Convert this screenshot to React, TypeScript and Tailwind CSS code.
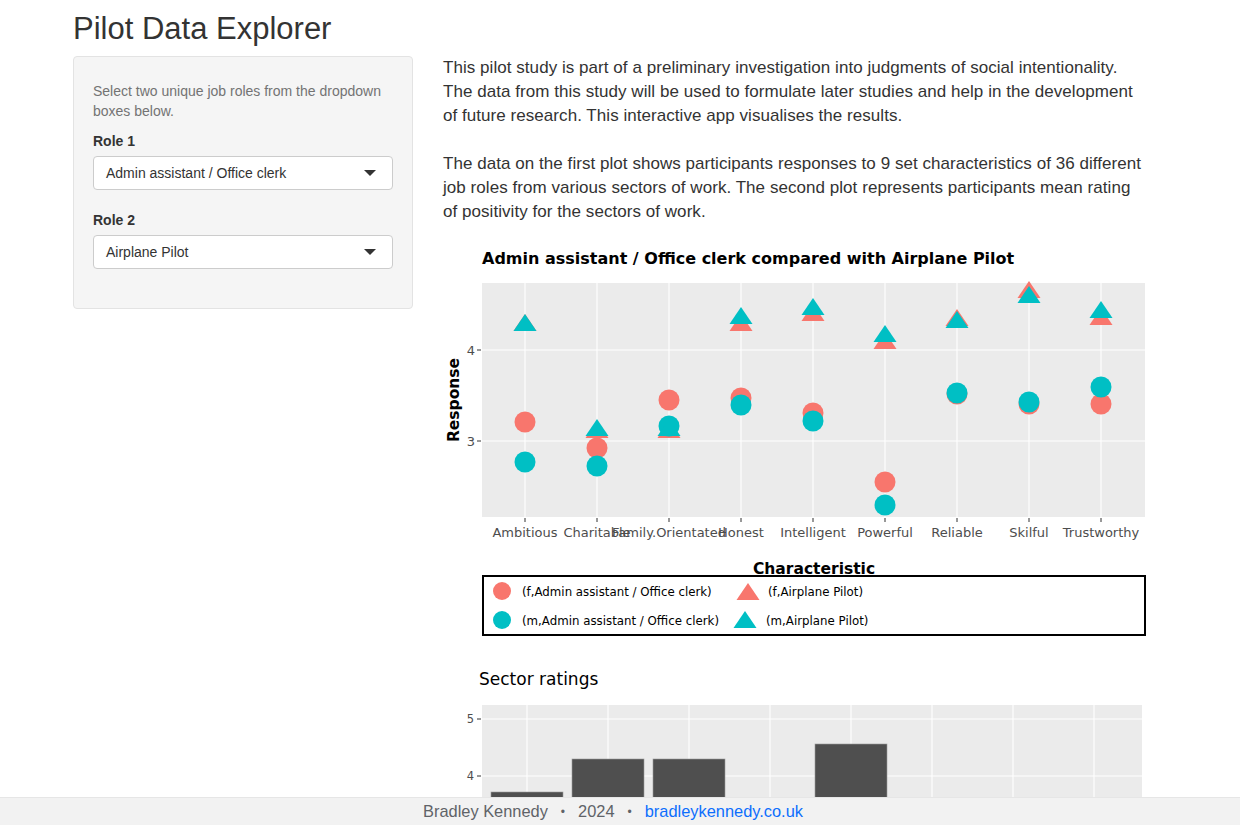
import React from "react";

const RED = "#F8766D";
const TEAL = "#00BFC4";

const TRAITS = [
  "Ambitious",
  "Charitable",
  "Family.Orientated",
  "Honest",
  "Intelligent",
  "Powerful",
  "Reliable",
  "Skilful",
  "Trustworthy",
];

// page-pixel y positions: [f circle, f triangle, m circle, m triangle]
const POINTS: number[][] = [
  [422, 323, 462, 323],
  [448, 430, 466, 428],
  [400, 430, 426, 428],
  [398, 323, 405, 316],
  [413, 313, 421, 307],
  [482, 341, 505, 334],
  [394, 318, 393, 320],
  [404, 290, 402, 295],
  [404, 317, 387, 310],
];

const BARS = [
  { x: 527, top: 792 },
  { x: 608, top: 759 },
  { x: 689, top: 759 },
  { x: 851, top: 744 },
];

const plotFont = "'DejaVu Sans', Verdana, sans-serif";

function tri(cx: number, cy: number) {
  return `${cx},${cy - 9} ${cx - 11.5},${cy + 8} ${cx + 11.5},${cy + 8}`;
}

function Select({ value }: { value: string }) {
  return (
    <div className="flex h-[34px] w-[300px] items-center justify-between rounded-[4px] border border-[#cccccc] bg-white pl-[12px] pr-[16px] text-[14px] text-[#333]">
      <span>{value}</span>
      <svg width="12" height="6" viewBox="0 0 12 6">
        <polygon points="0,0 12,0 6,6" fill="#333" />
      </svg>
    </div>
  );
}

function ComparePlot() {
  return (
    <svg width="710" height="400" className="block">
      <g transform="translate(-443,-240)" fontFamily={plotFont}>
        <text x="482" y="264" fontSize="16" fontWeight="bold" fill="#000">
          Admin assistant / Office clerk compared with Airplane Pilot
        </text>
        <rect x="482" y="283" width="663" height="234" fill="#EBEBEB" />
        {[350, 441].map((y) => (
          <line key={y} x1="482" x2="1145" y1={y} y2={y} stroke="#fff" strokeWidth="1.1" />
        ))}
        {TRAITS.map((_, i) => (
          <line key={i} x1={525 + 72 * i} x2={525 + 72 * i} y1="283" y2="517" stroke="#fff" strokeWidth="1.1" />
        ))}
        {[
          { y: 350, l: "4" },
          { y: 441, l: "3" },
        ].map((t) => (
          <g key={t.l}>
            <line x1="477" x2="481" y1={t.y} y2={t.y} stroke="#333" />
            <text x="475" y={t.y + 4.5} fontSize="13" fill="#4d4d4d" textAnchor="end">
              {t.l}
            </text>
          </g>
        ))}
        {TRAITS.map((t, i) => (
          <g key={t}>
            <line x1={525 + 72 * i} x2={525 + 72 * i} y1="518" y2="522" stroke="#333" />
            <text x={525 + 72 * i} y="537" fontSize="13" fill="#4d4d4d" textAnchor="middle">
              {t}
            </text>
          </g>
        ))}
        <text
          transform="translate(459,400) rotate(-90)"
          fontSize="15.5"
          fontWeight="bold"
          textAnchor="middle"
          fill="#000"
        >
          Response
        </text>
        <text x="814" y="574" fontSize="15.5" fontWeight="bold" textAnchor="middle" fill="#000">
          Characteristic
        </text>

        {POINTS.map((p, i) => {
          const cx = 525 + 72 * i;
          return (
            <g key={i}>
              <circle cx={cx} cy={p[0]} r="10.5" fill={RED} />
              <polygon points={tri(cx, p[1])} fill={RED} />
              <circle cx={cx} cy={p[2]} r="10.5" fill={TEAL} />
              <polygon points={tri(cx, p[3])} fill={TEAL} />
            </g>
          );
        })}

        <rect x="483" y="576" width="662" height="59" fill="#fff" stroke="#000" strokeWidth="2" />
        <circle cx="502" cy="591" r="9" fill={RED} />
        <text x="522" y="595.5" fontSize="11.8" fill="#000">
          (f,Admin assistant / Office clerk)
        </text>
        <polygon points={tri(748, 592)} fill={RED} />
        <text x="768" y="595.5" fontSize="11.8" fill="#000">
          (f,Airplane Pilot)
        </text>
        <circle cx="502" cy="620" r="9" fill={TEAL} />
        <text x="522" y="624.5" fontSize="11.8" fill="#000">
          (m,Admin assistant / Office clerk)
        </text>
        <polygon points={tri(745, 620)} fill={TEAL} />
        <text x="766" y="624.5" fontSize="11.8" fill="#000">
          (m,Airplane Pilot)
        </text>
      </g>
    </svg>
  );
}

function SectorPlot() {
  const cols = [527, 608, 689, 770, 851, 932, 1013, 1094];
  return (
    <svg width="710" height="420" className="block">
      <g transform="translate(-443,-655)" fontFamily={plotFont}>
        <text x="479" y="685" fontSize="17" fill="#000">
          Sector ratings
        </text>
        <rect x="482" y="705" width="660" height="360" fill="#EBEBEB" />
        {[719, 776, 833, 890, 947].map((y) => (
          <line key={y} x1="482" x2="1142" y1={y} y2={y} stroke="#fff" strokeWidth="1.1" />
        ))}
        {cols.map((x) => (
          <line key={x} x1={x} x2={x} y1="705" y2="1065" stroke="#fff" strokeWidth="1.1" />
        ))}
        {[
          { y: 719, l: "5" },
          { y: 776, l: "4" },
          { y: 833, l: "3" },
        ].map((t) => (
          <g key={t.l}>
            <line x1="477" x2="481" y1={t.y} y2={t.y} stroke="#333" />
            <text x="474" y={t.y + 4} fontSize="11.5" fill="#4d4d4d" textAnchor="end">
              {t.l}
            </text>
          </g>
        ))}
        {BARS.map((b) => (
          <rect
            key={b.x}
            x={b.x - 36}
            y={b.top}
            width="72"
            height={1065 - b.top}
            fill="#4f4f4f"
            stroke="#9a9a9a"
            strokeWidth="0.6"
          />
        ))}
      </g>
    </svg>
  );
}

export default function App() {
  return (
    <div
      className="min-h-screen bg-white pb-[40px] text-[#333]"
      style={{ fontFamily: "'Liberation Sans', Arial, sans-serif" }}
    >
      <div className="pl-[73px]">
        <h2 className="pt-[12px] text-[31px] leading-[34px] font-normal text-[#333]">Pilot Data Explorer</h2>

        <div className="mt-[10px] flex items-start gap-[30px]">
          {/* Sidebar */}
          <div className="w-[340px] rounded-[4px] border border-[#e3e3e3] bg-[#f5f5f5] px-[19px] pt-[24px] pb-[39px]">
            <p className="text-[14px] leading-[20px] text-[#737373]">
              Select two unique job roles from the dropdown boxes below.
            </p>
            <div className="mt-[10px] text-[14px] leading-[20px] font-bold text-[#333]">Role 1</div>
            <div className="mt-[5px]">
              <Select value="Admin assistant / Office clerk" />
            </div>
            <div className="mt-[20px] text-[14px] leading-[20px] font-bold text-[#333]">Role 2</div>
            <div className="mt-[5px]">
              <Select value="Airplane Pilot" />
            </div>
          </div>

          {/* Main */}
          <div className="w-[710px]">
            <p className="w-[705px] text-[17px] leading-[24px] tracking-[0.05px] text-[#333]">
              This pilot study is part of a preliminary investigation into judgments of social intentionality. The
              data from this study will be used to formulate later studies and help in the development of future
              research. This interactive app visualises the results.
            </p>
            <p className="mt-[24px] w-[705px] text-[17px] leading-[24px] tracking-[0.05px] text-[#333]">
              The data on the first plot shows participants responses to 9 set characteristics of 36 different job
              roles from various sectors of work. The second plot represents participants mean rating of positivity
              for the sectors of work.
            </p>
            <div className="mt-[16px]">
              <ComparePlot />
            </div>
            <div className="mt-[15px]">
              <SectorPlot />
            </div>
          </div>
        </div>
      </div>

      <footer className="fixed inset-x-0 bottom-0 flex h-[28px] items-center justify-center gap-[13px] border-t border-[#e6e6e6] bg-[#f2f2f2] pr-[14px] text-[16.4px] text-[#5f6368]">
        <span>Bradley Kennedy</span>
        <span className="text-[12px]">•</span>
        <span>2024</span>
        <span className="text-[12px]">•</span>
        <a href="#" className="text-[#0d6efd]">
          bradleykennedy.co.uk
        </a>
      </footer>
    </div>
  );
}
